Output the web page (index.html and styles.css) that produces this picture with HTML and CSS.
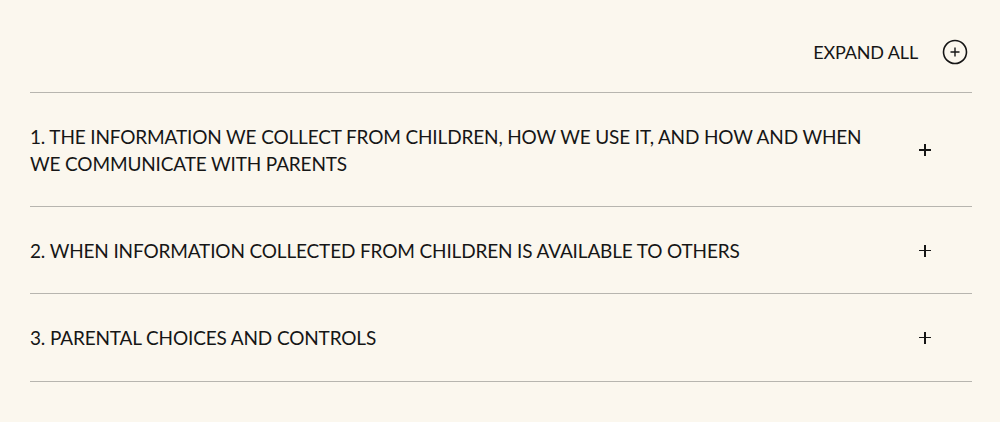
FILE: index.html
```html
<!DOCTYPE html>
<html lang="en">
<head>
<meta charset="utf-8">
<title>Policy</title>
<link rel="stylesheet" href="styles.css">
</head>
<body>
<div class="wrap">
  <div class="toolbar">
    <button class="expand-all">
      <span class="expand-label">EXPAND ALL</span>
      <svg class="expand-icon" width="26" height="26" viewBox="0 0 26 26" aria-hidden="true">
        <circle cx="13" cy="13" r="11.5" fill="none" stroke="#161616" stroke-width="1.6"/>
        <path d="M13 8.5v9M8.5 13h9" stroke="#161616" stroke-width="1.4" fill="none"/>
      </svg>
    </button>
  </div>
  <ul class="accordion">
    <li class="item">
      <span class="title">1. THE INFORMATION WE COLLECT FROM CHILDREN, HOW WE USE IT, AND HOW AND WHEN WE COMMUNICATE WITH PARENTS</span>
      <span class="plus" aria-hidden="true"></span>
    </li>
    <li class="item">
      <span class="title">2. WHEN INFORMATION COLLECTED FROM CHILDREN IS AVAILABLE TO OTHERS</span>
      <span class="plus" aria-hidden="true"></span>
    </li>
    <li class="item">
      <span class="title">3. PARENTAL CHOICES AND CONTROLS</span>
      <span class="plus" aria-hidden="true"></span>
    </li>
  </ul>
</div>
</body>
</html>
```

FILE: styles.css
```css
html, body {
  margin: 0;
  padding: 0;
  background: #fbf7ee;
}
body {
  font-family: Lato, "Liberation Sans", sans-serif;
  color: #161616;
  font-size: 19px;
  letter-spacing: -0.15px;
}
.wrap {
  width: 942px;
  margin-left: 30px;
}
.toolbar {
  display: flex;
  justify-content: flex-end;
  height: 93px;
  border-bottom: 1px solid #b7b5af;
  box-sizing: border-box;
}
.expand-all {
  display: flex;
  align-items: center;
  gap: 24px;
  background: none;
  border: 0;
  padding: 0 4px 0 0;
  margin-top: 39px;
  height: 26px;
  font: inherit;
  letter-spacing: inherit;
  color: inherit;
  cursor: pointer;
}
.expand-label {
  font-size: 18px;
  line-height: 26px;
}
.expand-icon {
  display: block;
}
.accordion {
  list-style: none;
  margin: 0;
  padding: 0;
}
.item {
  display: flex;
  align-items: center;
  padding: 30px 0 29px;
  border-bottom: 1px solid #b7b5af;
}
.item:last-child {
  padding-bottom: 30px;
}
.title {
  width: 850px;
  line-height: 27px;
}
.plus {
  position: relative;
  width: 12px;
  height: 12px;
  margin-left: 39px;
}
.plus::before,
.plus::after {
  content: "";
  position: absolute;
  background: #161616;
}
.plus::before {
  left: 0;
  top: 5px;
  width: 12px;
  height: 1.6px;
}
.plus::after {
  left: 5.2px;
  top: 0;
  width: 1.6px;
  height: 12px;
}
```
